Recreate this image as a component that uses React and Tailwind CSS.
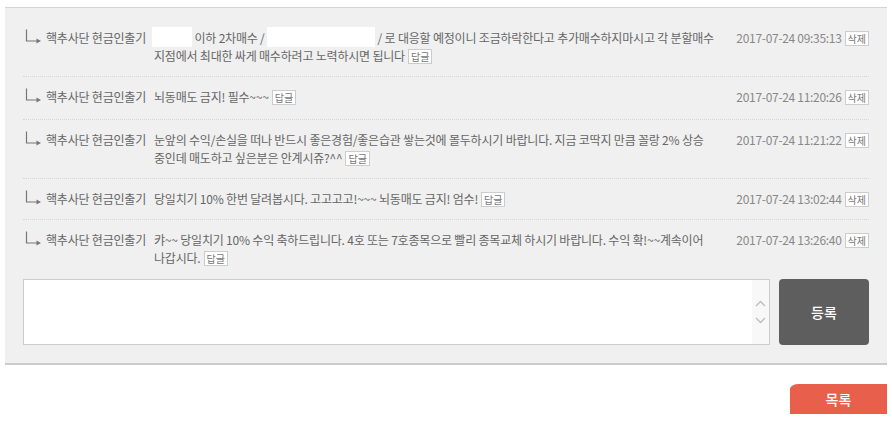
import React from 'react';

const font = { fontFamily: '"Noto Sans CJK KR", "Noto Sans", sans-serif' };

const Tag = ({ children }) => (
  <span className="inline-block align-top mt-[2px] ml-[3px] px-[2px] h-[15px] leading-[13px] text-[10px] tracking-normal text-[#777] bg-white border border-[#ccc]">
    {children}
  </span>
);

const Blank = ({ w }) => (
  <span className={`inline-block align-top -mt-[2px] h-[20px] bg-white ${w}`} />
);

const ReplyArrow = () => (
  <svg width="18" height="18" viewBox="0 0 18 18" className="ml-[2px] mr-[3px] shrink-0">
    <path d="M1.5 0.5 V12 H12" fill="none" stroke="#777" strokeWidth="1.2" />
    <path d="M11.5 9.5 L16 12 L11.5 14.5 Z" fill="#777" />
  </svg>
);

const comments = [
  {
    lines: [
      <>
        <Blank w="w-[40px] -ml-[2px]" /> 이하 2차매수 / <Blank w="w-[108px]" /> / 로 대응할 예정이니 조금하락한다고 추가매수하지마시고 각 분할매수
      </>,
      <>지점에서 최대한 싸게 매수하려고 노력하시면 됩니다<Tag>답글</Tag></>,
    ],
    date: '2017-07-24 09:35:13',
  },
  {
    lines: [<>뇌동매도 금지! 필수~~~<Tag>답글</Tag></>],
    date: '2017-07-24 11:20:26',
    tall: true,
  },
  {
    lines: [
      <>눈앞의 수익/손실을 떠나 반드시 좋은경험/좋은습관 쌓는것에 몰두하시기 바랍니다. 지금 코딱지 만큼 꼴랑 2% 상승</>,
      <>중인데 매도하고 싶은분은 안계시쥬?^^<Tag>답글</Tag></>,
    ],
    date: '2017-07-24 11:21:22',
  },
  {
    lines: [<>당일치기 10% 한번 달려봅시다. 고고고고!~~~ 뇌동매도 금지! 엄수!<Tag>답글</Tag></>],
    date: '2017-07-24 13:02:44',
  },
  {
    lines: [
      <>캬~~ 당일치기 10% 수익 축하드립니다. 4호 또는 7호종목으로 빨리 종목교체 하시기 바랍니다. 수익 확!~~계속이어</>,
      <>나갑시다.<Tag>답글</Tag></>,
    ],
    date: '2017-07-24 13:26:40',
  },
];

const App = () => {
  return (
    <div className="min-h-[424px] bg-white px-[5px] pt-[7px]" style={font}>
      {/* comment panel */}
      <div className="bg-[#f0f0f0] border-t border-[#d4d4d4] border-b-2 border-b-[#cccccc] px-[18px] pt-[10px] pb-[18px]">
        {comments.map((c, i) => (
          <div
            key={i}
            className={`flex items-start pt-[11px] text-[12px] leading-[18px] ${c.tall ? 'pb-[13px]' : 'pb-[11px]'} ${
              i < comments.length - 1 ? 'border-b border-dotted border-[#d6d6d6]' : ''
            }`}
          >
            <ReplyArrow />
            <span className="w-[108px] shrink-0 whitespace-nowrap text-[#666] tracking-[-0.2px]">핵추사단 현금인출기</span>
            <div className="flex-1 min-w-0 text-[#666] tracking-[-0.2px]">
              {c.lines.map((l, j) => (
                <div key={j} className="whitespace-nowrap">{l}</div>
              ))}
            </div>
            <div className="shrink-0 flex items-start justify-end whitespace-nowrap text-[#888]">
              <span className="tracking-[-0.3px]">{c.date}</span>
              <Tag>삭제</Tag>
            </div>
          </div>
        ))}

        {/* write box */}
        <div className="flex gap-[9px] mt-[1px]">
          <div className="flex-1 h-[66px] flex bg-white border border-[#cccccc]">
            <textarea className="flex-1 resize-none outline-none p-2 text-[12px]" />
            <div className="w-[17px] bg-[#f8f8f8] flex flex-col items-center justify-center gap-[10px]">
              <svg width="11" height="7" viewBox="0 0 11 7">
                <path d="M1 6 L5.5 1.5 L10 6" fill="none" stroke="#bdbdbd" strokeWidth="1.3" />
              </svg>
              <svg width="11" height="7" viewBox="0 0 11 7">
                <path d="M1 1 L5.5 5.5 L10 1" fill="none" stroke="#bdbdbd" strokeWidth="1.3" />
              </svg>
            </div>
          </div>
          <button className="w-[90px] h-[66px] rounded-[4px] bg-[#5f5e5e] text-white text-[14px] font-medium">
            등록
          </button>
        </div>
      </div>

      {/* list button */}
      <div className="flex justify-end pt-[19px]">
        <button className="w-[97px] h-[30px] rounded-tl-[9px_5px] bg-[#e8604c] text-white text-[14px] font-medium">
          목록
        </button>
      </div>
    </div>
  );
};

export default App;
